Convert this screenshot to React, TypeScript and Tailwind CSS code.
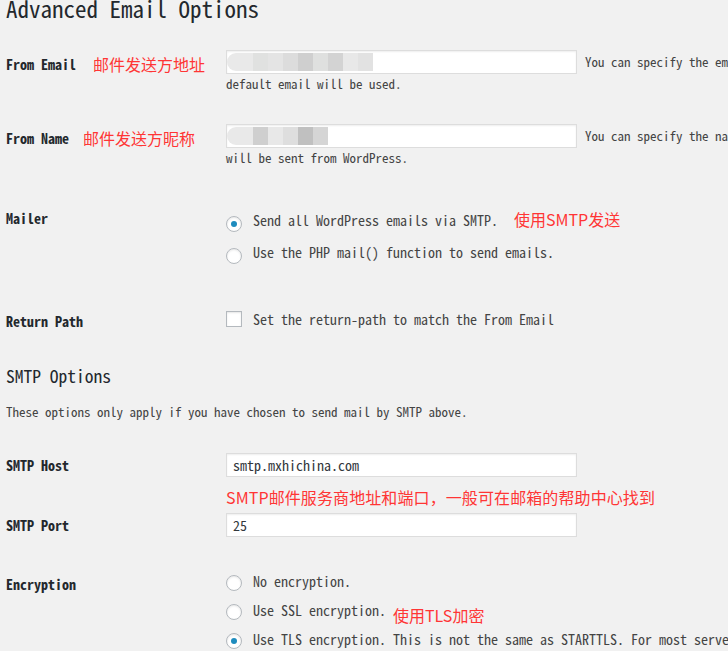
import React from "react";

const mono = "font-['Noto_Sans_Mono_CJK_SC','Liberation_Mono',monospace]";
const label = "font-['Noto_Sans_Mono_CJK_SC','Liberation_Mono',monospace] text-[14px] leading-[14px] font-bold text-[#23282d] whitespace-nowrap";
const desc = "font-['Noto_Sans_Mono_CJK_SC','Liberation_Mono',monospace] text-[13px] leading-[13px] text-[#444] whitespace-nowrap";
const opt = "font-['Noto_Sans_Mono_CJK_SC','Liberation_Mono',monospace] text-[14px] leading-[14px] text-[#444] whitespace-nowrap";
const red = "font-['Noto_Sans_CJK_SC',sans-serif] text-[16px] leading-[16px] text-[#ff3535] whitespace-nowrap";

function Radio({ checked }: { checked?: boolean }) {
  return (
    <span className="mt-[3px] w-4 h-4 rounded-full border border-[#b4b9be] bg-white shadow-[inset_0_1px_2px_rgba(0,0,0,0.1)] flex items-center justify-center shrink-0">
      {checked && <span className="w-[6px] h-[6px] rounded-full bg-[#1e8cbe]" />}
    </span>
  );
}

function Blobs({ colors }: { colors: string[] }) {
  return (
    <div className="flex h-[18px] blur-[0.6px]">
      <div className="w-[26px] h-full rounded-l-full bg-[#e9e9e9]" />
      {colors.map((c, i) => (
        <div key={i} className="w-[15px] h-full" style={{ backgroundColor: c }} />
      ))}
    </div>
  );
}

function Input({ children }: { children?: React.ReactNode }) {
  return (
    <div className="w-[351px] h-[24px] shrink-0 border border-[#ddd] bg-white shadow-[inset_0_1px_2px_rgba(0,0,0,0.07)] flex items-center">
      {children}
    </div>
  );
}

export default function App() {
  return (
    <div className="w-[728px] h-[651px] overflow-hidden bg-[#f1f1f1] pl-[6px]">
      <h1 className={mono + " text-[23px] leading-[16px] h-[16px] text-[#23282d] font-normal whitespace-nowrap"}>
        Advanced Email Options
      </h1>

      {/* From Email */}
      <div className="flex h-[74px] mt-[34px]">
        <div className="w-[220px] shrink-0 flex items-start">
          <span className={label + " mt-[7px]"}>From Email</span>
          <span className={red + " mt-[6px] ml-[17px]"}>邮件发送方地址</span>
        </div>
        <div className="flex flex-col">
          <div className="flex items-start">
            <Input>
              <Blobs colors={["#e0e1e0", "#e4e4e4", "#dcdcdc", "#cfcfcf", "#dfe0df", "#d3d3d3", "#e8e8e8", "#e2e2e2"]} />
            </Input>
            <span className={desc + " mt-[5px] ml-[8px]"}>
              You can specify the email address that emails should be sent from. If you leave this blank, the
            </span>
          </div>
          <span className={desc + " mt-[3px]"}>default email will be used.</span>
        </div>
      </div>

      {/* From Name */}
      <div className="flex h-[86px]">
        <div className="w-[220px] shrink-0 flex items-start">
          <span className={label + " mt-[7px]"}>From Name</span>
          <span className={red + " mt-[6px] ml-[14px]"}>邮件发送方昵称</span>
        </div>
        <div className="flex flex-col">
          <div className="flex items-start">
            <Input>
              <Blobs colors={["#cfcfcf", "#e8e8e8", "#dedede", "#c0c0c0", "#d5d5d5"]} />
            </Input>
            <span className={desc + " mt-[5px] ml-[8px]"}>
              You can specify the name that emails should be sent from. If you leave this blank, the emails
            </span>
          </div>
          <span className={desc + " mt-[3px]"}>will be sent from WordPress.</span>
        </div>
      </div>

      {/* Mailer */}
      <div className="flex h-[101px]">
        <div className="w-[220px] shrink-0">
          <span className={label + " block mt-[1px]"}>Mailer</span>
        </div>
        <div className="flex flex-col gap-[13px] pt-[3px]">
          <div className="flex items-start gap-[11px] h-[19px]">
            <Radio checked />
            <span className={opt}>Send all WordPress emails via SMTP.</span>
            <span className={red + " -mt-[2px] ml-[5px]"}>使用SMTP发送</span>
          </div>
          <div className="flex items-start gap-[11px] h-[19px]">
            <Radio />
            <span className={opt}>Use the PHP mail() function to send emails.</span>
          </div>
        </div>
      </div>

      {/* Return Path */}
      <div className="flex h-[56px]">
        <div className="w-[220px] shrink-0">
          <span className={label + " block mt-[3px]"}>Return Path</span>
        </div>
        <div className="flex items-start gap-[11px]">
          <span className="w-4 h-4 border border-[#b4b9be] bg-white shadow-[inset_0_1px_2px_rgba(0,0,0,0.1)] shrink-0" />
          <span className={opt + " mt-[1px]"}>Set the return-path to match the From Email</span>
        </div>
      </div>

      <h2 className={mono + " text-[17.5px] leading-[18px] h-[18px] font-medium text-[#23282d] whitespace-nowrap"}>
        SMTP Options
      </h2>
      <p className={desc + " mt-[20px]"}>These options only apply if you have chosen to send mail by SMTP above.</p>

      {/* SMTP Host */}
      <div className="flex mt-[35px]">
        <div className="w-[220px] shrink-0">
          <span className={label + " block mt-[5px]"}>SMTP Host</span>
        </div>
        <div className="flex flex-col">
          <Input>
            <span className={opt + " pl-[6px] text-[#32373c]"}>smtp.mxhichina.com</span>
          </Input>
          <span className={red + " mt-[12px] tracking-[0.1px]"}>SMTP邮件服务商地址和端口，一般可在邮箱的帮助中心找到</span>
        </div>
      </div>

      {/* SMTP Port */}
      <div className="flex mt-[8px]">
        <div className="w-[220px] shrink-0">
          <span className={label + " block mt-[5px]"}>SMTP Port</span>
        </div>
        <Input>
          <span className={opt + " pl-[6px] text-[#32373c]"}>25</span>
        </Input>
      </div>

      {/* Encryption */}
      <div className="flex mt-[35px]">
        <div className="w-[220px] shrink-0">
          <span className={label + " block mt-[5px]"}>Encryption</span>
        </div>
        <div className="flex flex-col gap-[10px]">
          <div className="flex items-start gap-[11px] h-[19px]">
            <Radio />
            <span className={opt + " mt-[2px]"}>No encryption.</span>
          </div>
          <div className="flex items-start gap-[11px] h-[19px]">
            <Radio />
            <span className={opt + " mt-[2px]"}>Use SSL encryption.</span>
            <span className={red + " mt-[6px] -ml-[4px]"}>使用TLS加密</span>
          </div>
          <div className="flex items-start gap-[11px] h-[19px]">
            <Radio checked />
            <span className={opt + " mt-[2px]"}>
              Use TLS encryption. This is not the same as STARTTLS. For most servers SSL is the recommended option.
            </span>
          </div>
        </div>
      </div>
    </div>
  );
}
